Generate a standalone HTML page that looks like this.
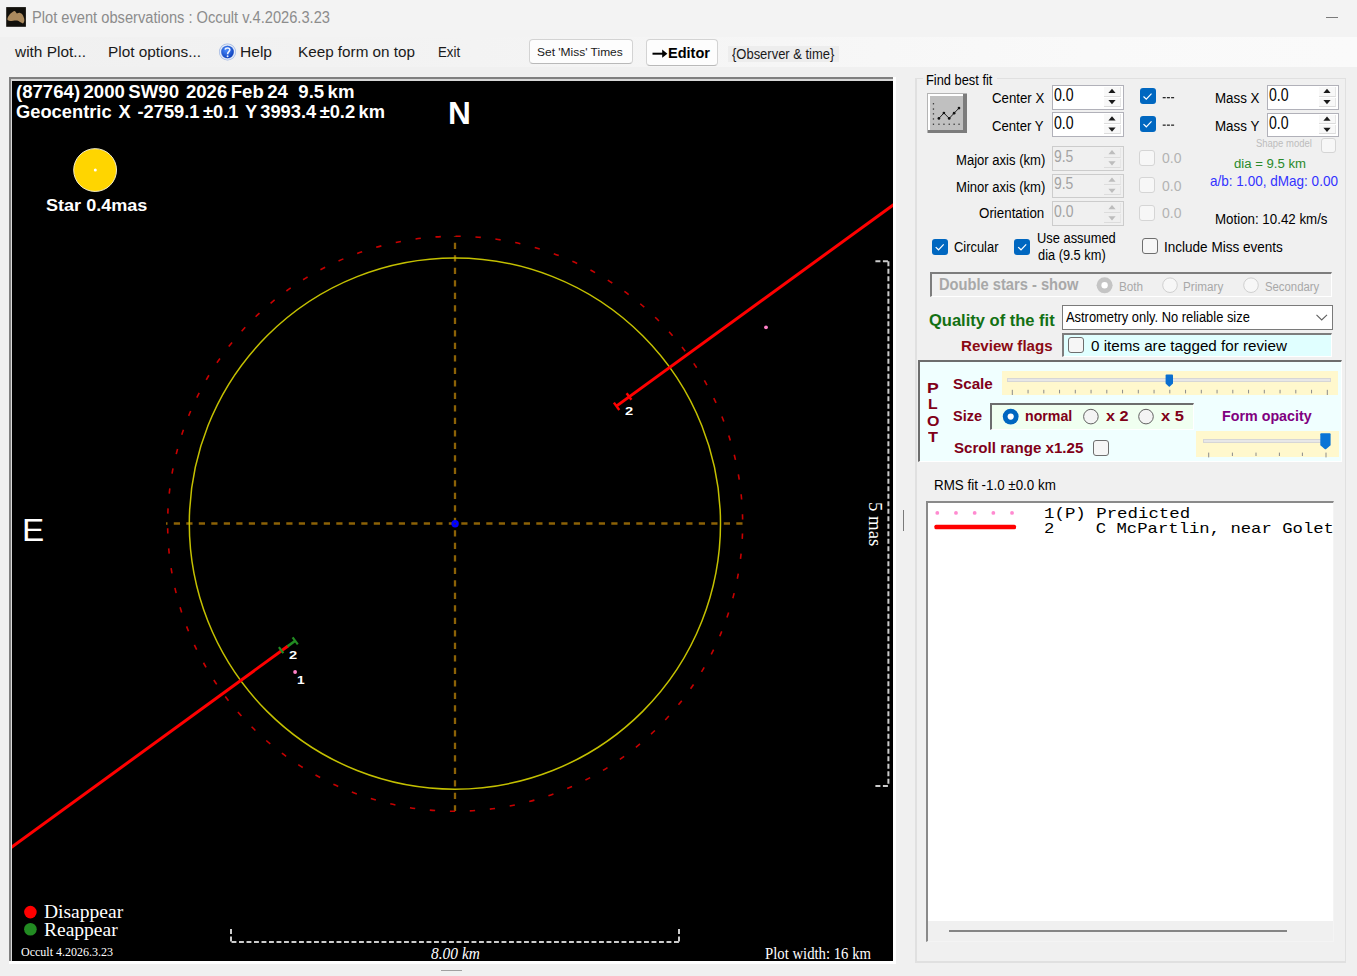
<!DOCTYPE html>
<html><head><meta charset="utf-8">
<style>
html,body{margin:0;padding:0;}
body{width:1357px;height:976px;position:relative;overflow:hidden;background:#f0f0f0;font-family:"Liberation Sans",sans-serif;}
.b{position:absolute;box-sizing:border-box;}
.t{position:absolute;white-space:pre;line-height:1;transform-origin:0 0;}
svg{position:absolute;left:0;top:0;}
</style></head><body>
<div class="b" style="left:0px;top:0px;width:1357px;height:37px;background:#f3f3f3"></div>
<div class="b" style="left:0px;top:37px;width:1357px;height:30px;background:linear-gradient(90deg,#f0f0f0 0%,#f3f3f3 35%,#f9f9f9 80%,#fafafa 100%)"></div>
<div class="b" style="left:1326px;top:16.5px;width:12px;height:1px;background:#7a7a7a"></div>
<div class="b" style="left:529px;top:39px;width:104px;height:25px;background:#fdfdfd;border:1px solid #d3d3d3;border-bottom-color:#b9b9b9;border-radius:4px"></div>
<div class="b" style="left:645.5px;top:39px;width:72.5px;height:27px;background:#fdfdfd;border:1px solid #d3d3d3;border-bottom-color:#b9b9b9;border-radius:4px"></div>
<div class="b" style="left:728px;top:46px;width:111px;height:16px;background:#ededed"></div>
<div class="b" style="left:9px;top:77px;width:887px;height:887px;background:#ffffff"></div>
<div class="b" style="left:9px;top:77px;width:884px;height:884px;background:#808080"></div>
<div class="b" style="left:11px;top:79px;width:882px;height:882px;background:#d8d8d8"></div>
<div class="b" style="left:12px;top:81px;width:881px;height:880px;background:#000000"></div>
<div class="b" style="left:441px;top:970px;width:21px;height:1px;background:#a0a0a0"></div>
<div class="b" style="left:915px;top:78px;width:431px;height:885px;border:1px solid #e0e0e0;border-left-width:2px;border-bottom-width:2px"></div>
<div class="b" style="left:923px;top:70px;width:74px;height:16px;background:#f0f0f0"></div>
<div class="b" style="left:926.5px;top:93px;width:40px;height:40px;background:#7c7c7c"></div>
<div class="b" style="left:926.5px;top:93px;width:40px;height:1px;background:#b4b4b4"></div>
<div class="b" style="left:926.5px;top:93px;width:1px;height:40px;background:#b4b4b4"></div>
<div class="b" style="left:927.5px;top:94px;width:35.5px;height:36px;background:#ffffff"></div>
<div class="b" style="left:929.5px;top:96px;width:33.5px;height:34px;background:#c0c0c0"></div>
<div class="b" style="left:1051.5px;top:84.5px;width:72.5px;height:25px;background:#ffffff;border:1.5px solid #b1b1b9"></div>
<div class="b" style="left:1104px;top:86.5px;width:17px;height:10px;background:#f8f8f8;border-right:1px solid #e6e6e6;border-bottom:1px solid #dcdcdc"></div>
<div class="b" style="left:1104px;top:97.5px;width:17px;height:9px;background:#f8f8f8;border-right:1px solid #e6e6e6;border-bottom:1px solid #dcdcdc"></div>

<div class="b" style="left:1051.5px;top:112px;width:72.5px;height:25px;background:#ffffff;border:1.5px solid #b1b1b9"></div>
<div class="b" style="left:1104px;top:114px;width:17px;height:10px;background:#f8f8f8;border-right:1px solid #e6e6e6;border-bottom:1px solid #dcdcdc"></div>
<div class="b" style="left:1104px;top:125px;width:17px;height:9px;background:#f8f8f8;border-right:1px solid #e6e6e6;border-bottom:1px solid #dcdcdc"></div>

<div class="b" style="left:1266.5px;top:84.5px;width:72.5px;height:25px;background:#ffffff;border:1.5px solid #b1b1b9"></div>
<div class="b" style="left:1319px;top:86.5px;width:17px;height:10px;background:#f8f8f8;border-right:1px solid #e6e6e6;border-bottom:1px solid #dcdcdc"></div>
<div class="b" style="left:1319px;top:97.5px;width:17px;height:9px;background:#f8f8f8;border-right:1px solid #e6e6e6;border-bottom:1px solid #dcdcdc"></div>

<div class="b" style="left:1266.5px;top:112.5px;width:72.5px;height:24.5px;background:#ffffff;border:1.5px solid #b1b1b9"></div>
<div class="b" style="left:1319px;top:114.5px;width:17px;height:9.75px;background:#f8f8f8;border-right:1px solid #e6e6e6;border-bottom:1px solid #dcdcdc"></div>
<div class="b" style="left:1319px;top:125.25px;width:17px;height:8.75px;background:#f8f8f8;border-right:1px solid #e6e6e6;border-bottom:1px solid #dcdcdc"></div>

<div class="b" style="left:1052px;top:146px;width:72px;height:24.5px;background:#f0f0f0;border:1.5px solid #cccccc"></div>
<div class="b" style="left:1104px;top:148px;width:17px;height:9.75px;background:#efefef;border-right:1px solid #e6e6e6;border-bottom:1px solid #dcdcdc"></div>
<div class="b" style="left:1104px;top:158.75px;width:17px;height:8.75px;background:#efefef;border-right:1px solid #e6e6e6;border-bottom:1px solid #dcdcdc"></div>

<div class="b" style="left:1052px;top:173.5px;width:72px;height:24.5px;background:#f0f0f0;border:1.5px solid #cccccc"></div>
<div class="b" style="left:1104px;top:175.5px;width:17px;height:9.75px;background:#efefef;border-right:1px solid #e6e6e6;border-bottom:1px solid #dcdcdc"></div>
<div class="b" style="left:1104px;top:186.25px;width:17px;height:8.75px;background:#efefef;border-right:1px solid #e6e6e6;border-bottom:1px solid #dcdcdc"></div>

<div class="b" style="left:1052px;top:201px;width:72px;height:24.5px;background:#f0f0f0;border:1.5px solid #cccccc"></div>
<div class="b" style="left:1104px;top:203px;width:17px;height:9.75px;background:#efefef;border-right:1px solid #e6e6e6;border-bottom:1px solid #dcdcdc"></div>
<div class="b" style="left:1104px;top:213.75px;width:17px;height:8.75px;background:#efefef;border-right:1px solid #e6e6e6;border-bottom:1px solid #dcdcdc"></div>

<div class="b" style="left:1139.5px;top:88.2px;width:16px;height:16px;background:#0067c0;border-radius:3px"></div>
<div class="b" style="left:1139.5px;top:115.8px;width:16px;height:16px;background:#0067c0;border-radius:3px"></div>
<div class="b" style="left:1321.3px;top:138px;width:14.5px;height:14.5px;background:#f7f7f7;border:1px solid #d5d5d5;border-radius:3px"></div>
<div class="b" style="left:1139.3px;top:150px;width:16px;height:16px;background:#f7f7f7;border:1px solid #d5d5d5;border-radius:3px"></div>
<div class="b" style="left:1139.3px;top:177.2px;width:16px;height:16px;background:#f7f7f7;border:1px solid #d5d5d5;border-radius:3px"></div>
<div class="b" style="left:1139.3px;top:204.5px;width:16px;height:16px;background:#f7f7f7;border:1px solid #d5d5d5;border-radius:3px"></div>
<div class="b" style="left:931.7px;top:238.8px;width:16px;height:16px;background:#0067c0;border-radius:3px"></div>
<div class="b" style="left:1014.2px;top:238.8px;width:16px;height:16px;background:#0067c0;border-radius:3px"></div>
<div class="b" style="left:1141.7px;top:238.4px;width:16px;height:16px;background:#f6f6f6;border:1px solid #6e6e6e;border-radius:3px"></div>
<div class="b" style="left:930px;top:272px;width:402px;height:25px;background:#f0f0f0;border-top:2px solid #7d7d7d;border-left:2px solid #7d7d7d;border-right:1px solid #ffffff;border-bottom:1px solid #ffffff"></div>
<div class="b" style="left:1062px;top:305px;width:270.5px;height:25px;background:#ffffff;border:1px solid #7a7a7a"></div>
<div class="b" style="left:1062px;top:332.5px;width:269.5px;height:24px;background:#e0ffff;border-top:2px solid #7d7d7d;border-left:2px solid #7d7d7d;border-right:1px solid #ffffff;border-bottom:1px solid #ffffff"></div>
<div class="b" style="left:1067.8px;top:337.4px;width:16px;height:16px;background:#f6f6f6;border:1px solid #6e6e6e;border-radius:3px"></div>
<div class="b" style="left:918px;top:359.7px;width:424px;height:102.1px;background:#f0ffff;border-top:2px solid #6d6d6d;border-left:2px solid #6d6d6d;border-right:1px solid #ffffff;border-bottom:1px solid #ffffff"></div>
<div class="b" style="left:1001.7px;top:371px;width:336.6px;height:23.7px;background:#fff8cd"></div>
<div class="b" style="left:1007.4px;top:377.8px;width:323.3px;height:4.2px;background:#e7e7e7;border:1px solid #d6d6d6"></div>
<div class="b" style="left:990.4px;top:402.8px;width:203.6px;height:27.6px;background:#f0fff0;border-top:2px solid #6d6d6d;border-left:2px solid #6d6d6d;border-right:1px solid #ffffff;border-bottom:1px solid #ffffff"></div>
<div class="b" style="left:1093px;top:440px;width:16px;height:16px;background:#f6f6f6;border:1px solid #6e6e6e;border-radius:3px"></div>
<div class="b" style="left:1195.5px;top:431.3px;width:143.4px;height:25.7px;background:#fff8cd"></div>
<div class="b" style="left:1203px;top:439.2px;width:126.8px;height:4.2px;background:#e7e7e7;border:1px solid #d6d6d6"></div>
<div class="b" style="left:903px;top:510px;width:1px;height:21px;background:#7a7a7a"></div>
<div class="b" style="left:925.7px;top:500.8px;width:408.3px;height:441.2px;background:#ffffff;border-top:2px solid #8a8a8a;border-left:2px solid #8a8a8a;border-right:1px solid #f4f4f4;border-bottom:1px solid #f4f4f4"></div>
<div class="b" style="left:927.7px;top:921px;width:405.3px;height:20px;background:#f0f0f0"></div>
<div class="b" style="left:948.5px;top:930px;width:338.2px;height:2.2px;background:#858585"></div>
<svg width="1357" height="976" style="position:absolute;left:0;top:0"><defs><clipPath id="pc"><rect x="12" y="81" width="881" height="880"/></clipPath></defs><g clip-path="url(#pc)"><path d="M166,523.5 H743" stroke="#8c6206" stroke-width="2.3" stroke-dasharray="6.2 6.3" stroke-dashoffset="4.7" fill="none"/><path d="M455,236 V811" stroke="#8c6206" stroke-width="2.3" stroke-dasharray="6.2 6.3" stroke-dashoffset="5.7" fill="none"/><circle cx="454.9" cy="523.55" r="265.6" fill="none" stroke="#c4c000" stroke-width="1.5"/><circle cx="455.15" cy="523.75" r="287.5" fill="none" stroke="#c80000" stroke-width="1.6" stroke-dasharray="5.3 14.77" stroke-dashoffset="-9.9"/><circle cx="455.1" cy="523.7" r="3.7" fill="#0000ff"/><circle cx="455.1" cy="523.7" r="0.9" fill="#3a2a40"/><path d="M10,848.4 L288,646" stroke="#ff0000" stroke-width="3" fill="none"/><path d="M616.4,406.1 L895,203.7" stroke="#ff0000" stroke-width="3" fill="none"/><path d="M287.5,646.4 L295.3,640.7" stroke="#228b22" stroke-width="2.6" fill="none"/><path d="M292.6,637.4 L297.8,644.4" stroke="#228b22" stroke-width="2.2" fill="none"/><path d="M278.9,647.1 L283.3,653.2" stroke="#228b22" stroke-width="2.2" fill="none"/><path d="M613.9,402.6 L619.3,410" stroke="#ff0000" stroke-width="2.4" fill="none"/><path d="M626.6,393.2 L631.4,399.8" stroke="#ff0000" stroke-width="2.4" fill="none"/><circle cx="295.1" cy="672" r="1.9" fill="#ff80c8"/><circle cx="766" cy="327.3" r="1.9" fill="#ff80c8"/><circle cx="95.1" cy="170.05" r="21.4" fill="#ffd500" stroke="#f4eec8" stroke-width="1"/><circle cx="95.3" cy="170.1" r="1.5" fill="#ffffff"/><circle cx="30.4" cy="912.1" r="6.3" fill="#ff0000"/><circle cx="30.4" cy="929.2" r="6.3" fill="#228b22"/><path d="M231,942 V929 M231,942 H679 M679,942 V929" stroke="#cccccc" stroke-width="2" stroke-dasharray="4.9 2.6" stroke-dashoffset="-0.5" fill="none"/><path d="M875.4,261.3 H888.7 M888.4,261.3 V786 M875.4,786 H888.7" stroke="#cccccc" stroke-width="2" stroke-dasharray="5 2.5" fill="none"/></g><path d="M1108.4,93 L1115.6,93 L1112,88.8 Z" fill="#1a1a1a"/><path d="M1108.4,100 L1115.6,100 L1112,104.2 Z" fill="#1a1a1a"/><path d="M1108.4,120.5 L1115.6,120.5 L1112,116.3 Z" fill="#1a1a1a"/><path d="M1108.4,127.5 L1115.6,127.5 L1112,131.7 Z" fill="#1a1a1a"/><path d="M1323.4,93 L1330.6,93 L1327,88.8 Z" fill="#1a1a1a"/><path d="M1323.4,100 L1330.6,100 L1327,104.2 Z" fill="#1a1a1a"/><path d="M1323.4,120.75 L1330.6,120.75 L1327,116.55 Z" fill="#1a1a1a"/><path d="M1323.4,127.75 L1330.6,127.75 L1327,131.95 Z" fill="#1a1a1a"/><path d="M1108.4,154.25 L1115.6,154.25 L1112,150.05 Z" fill="#bdbdbd"/><path d="M1108.4,161.25 L1115.6,161.25 L1112,165.45 Z" fill="#bdbdbd"/><path d="M1108.4,181.75 L1115.6,181.75 L1112,177.55 Z" fill="#bdbdbd"/><path d="M1108.4,188.75 L1115.6,188.75 L1112,192.95 Z" fill="#bdbdbd"/><path d="M1108.4,209.25 L1115.6,209.25 L1112,205.05 Z" fill="#bdbdbd"/><path d="M1108.4,216.25 L1115.6,216.25 L1112,220.45 Z" fill="#bdbdbd"/><path d="M1143.5,96.5 L1146.3,99.2 L1151.5,93.7" fill="none" stroke="#ffffff" stroke-width="1.2"/><path d="M1143.5,124.1 L1146.3,126.8 L1151.5,121.3" fill="none" stroke="#ffffff" stroke-width="1.2"/><path d="M935.7,247.1 L938.5,249.8 L943.7,244.3" fill="none" stroke="#ffffff" stroke-width="1.2"/><path d="M1018.2,247.1 L1021,249.8 L1026.2,244.3" fill="none" stroke="#ffffff" stroke-width="1.2"/><circle cx="1104.6" cy="285.3" r="8" fill="#c4c4c4"/><circle cx="1104.6" cy="285.3" r="3.2" fill="#ffffff"/><circle cx="1170" cy="285.2" r="7.3" fill="#f7f7f7" stroke="#d0d0d0" stroke-width="1"/><circle cx="1251" cy="285.2" r="7.3" fill="#f7f7f7" stroke="#d0d0d0" stroke-width="1"/><path d="M1316.5,314.8 L1321.7,320 L1327,314.8" fill="none" stroke="#606060" stroke-width="1.1"/><rect x="1011.8" y="389.8" width="1" height="5.2" fill="#8c8c8c"/><rect x="1027.55" y="389.8" width="1" height="3.6" fill="#8c8c8c"/><rect x="1043.3" y="389.8" width="1" height="3.6" fill="#8c8c8c"/><rect x="1059.05" y="389.8" width="1" height="3.6" fill="#8c8c8c"/><rect x="1074.8" y="389.8" width="1" height="3.6" fill="#8c8c8c"/><rect x="1090.55" y="389.8" width="1" height="3.6" fill="#8c8c8c"/><rect x="1106.3" y="389.8" width="1" height="3.6" fill="#8c8c8c"/><rect x="1122.05" y="389.8" width="1" height="3.6" fill="#8c8c8c"/><rect x="1137.8" y="389.8" width="1" height="3.6" fill="#8c8c8c"/><rect x="1153.55" y="389.8" width="1" height="3.6" fill="#8c8c8c"/><rect x="1169.3" y="389.8" width="1" height="3.6" fill="#8c8c8c"/><rect x="1185.05" y="389.8" width="1" height="3.6" fill="#8c8c8c"/><rect x="1200.8" y="389.8" width="1" height="3.6" fill="#8c8c8c"/><rect x="1216.55" y="389.8" width="1" height="3.6" fill="#8c8c8c"/><rect x="1232.3" y="389.8" width="1" height="3.6" fill="#8c8c8c"/><rect x="1248.05" y="389.8" width="1" height="3.6" fill="#8c8c8c"/><rect x="1263.8" y="389.8" width="1" height="3.6" fill="#8c8c8c"/><rect x="1279.55" y="389.8" width="1" height="3.6" fill="#8c8c8c"/><rect x="1295.3" y="389.8" width="1" height="3.6" fill="#8c8c8c"/><rect x="1311.05" y="389.8" width="1" height="3.6" fill="#8c8c8c"/><rect x="1326.8" y="389.8" width="1" height="5.2" fill="#8c8c8c"/><path d="M1165.6,375.5 Q1165.6,374.6 1166.5,374.6 L1172.1,374.6 Q1173,374.6 1173,375.5 L1173,383.4 L1169.8,386.6 Q1169.3,387 1168.8,386.6 L1165.6,383.4 Z" fill="#0a6fd0"/><circle cx="1010.7" cy="416.6" r="7.9" fill="#0067c0"/><circle cx="1010.7" cy="416.6" r="3.1" fill="#ffffff"/><circle cx="1090.9" cy="416.6" r="7.3" fill="#f4f4f4" stroke="#616161" stroke-width="1"/><circle cx="1146" cy="416.6" r="7.3" fill="#f4f4f4" stroke="#616161" stroke-width="1"/><rect x="1208.2" y="452.6" width="1" height="4.8" fill="#8c8c8c"/><rect x="1231.9" y="452.6" width="1" height="3.4" fill="#8c8c8c"/><rect x="1255.5" y="452.6" width="1" height="3.4" fill="#8c8c8c"/><rect x="1278.9" y="452.6" width="1" height="3.4" fill="#8c8c8c"/><rect x="1301.9" y="452.6" width="1" height="3.4" fill="#8c8c8c"/><rect x="1325.5" y="452.6" width="1" height="4.8" fill="#8c8c8c"/><path d="M1320.3,434.2 Q1320.3,433.3 1321.2,433.3 L1329.7,433.3 Q1330.6,433.3 1330.6,434.2 L1330.6,445.2 L1326.2,449 Q1325.45,449.5 1324.7,449 L1320.3,445.2 Z" fill="#0a74d6"/><rect x="1162.7" y="97" width="3" height="1.3" fill="#2a2a2a"/><rect x="1166.9" y="97" width="3" height="1.3" fill="#2a2a2a"/><rect x="1171.1" y="97" width="3" height="1.3" fill="#2a2a2a"/><rect x="1162.7" y="124.5" width="3" height="1.3" fill="#2a2a2a"/><rect x="1166.9" y="124.5" width="3" height="1.3" fill="#2a2a2a"/><rect x="1171.1" y="124.5" width="3" height="1.3" fill="#2a2a2a"/><circle cx="937.3" cy="512.9" r="1.9" fill="#ff8ad0"/><circle cx="955.98" cy="512.9" r="1.9" fill="#ff8ad0"/><circle cx="974.66" cy="512.9" r="1.9" fill="#ff8ad0"/><circle cx="993.34" cy="512.9" r="1.9" fill="#ff8ad0"/><circle cx="1012.02" cy="512.9" r="1.9" fill="#ff8ad0"/><rect x="934.4" y="524.7" width="81.6" height="4.6" rx="1.6" fill="#ff0000"/><path d="M652.5,53.7 H664" stroke="#000" stroke-width="2"/><path d="M662.2,49.6 L667.4,53.7 L662.2,57.8 Z" fill="#000"/><defs><radialGradient id="hg" cx="0.4" cy="0.35" r="0.7"><stop offset="0" stop-color="#4a8cff"/><stop offset="1" stop-color="#0a3cb8"/></radialGradient></defs><circle cx="227.5" cy="52" r="8.5" fill="#9fb6e2"/><circle cx="227.5" cy="52" r="7.2" fill="none" stroke="#e4ecfa" stroke-width="1.3"/><circle cx="227.5" cy="52" r="6.2" fill="url(#hg)"/><path d="M225.2,49.6 C225.3,47.6 229.8,47.4 229.8,49.8 C229.8,51.6 227.6,51.8 227.6,54.3" fill="none" stroke="#eef4ff" stroke-width="1.6"/><circle cx="227.6" cy="56.3" r="0.95" fill="#eef4ff"/><rect x="6.2" y="7.1" width="19.7" height="19.7" fill="#12100c"/><path d="M7.4,19 C8,16 11,12.5 14.4,11.1 C15.5,11.3 16,12.8 16.9,13.6 C18,13 19,12.7 20.1,12.9 C22,13.5 23.2,15 23.6,17 C24.5,19 25,21.5 23,23.6 C21,22.8 19,21 17.2,20.5 C14,20.2 11,21.5 9.3,20.8 C8.2,20.5 7.3,20 7.4,19 Z" fill="#ab8a5e"/><rect x="932.8" y="103.1" width="1.3" height="1.3" fill="#333"/><rect x="932.8" y="108.4" width="1.3" height="1.3" fill="#333"/><rect x="932.8" y="113.2" width="1.3" height="1.3" fill="#333"/><rect x="932.8" y="118.3" width="1.3" height="1.3" fill="#333"/><rect x="932.8" y="123.6" width="1.3" height="1.3" fill="#333"/><rect x="938.3" y="123.6" width="1.3" height="1.3" fill="#333"/><rect x="943.3" y="123.6" width="1.3" height="1.3" fill="#333"/><rect x="948.6" y="123.6" width="1.3" height="1.3" fill="#333"/><rect x="953.5" y="123.6" width="1.3" height="1.3" fill="#333"/><rect x="958.4" y="123.6" width="1.3" height="1.3" fill="#333"/><path d="M938.9,118.4 L943.9,113 L949.2,118.4 L954.1,113.2 L959,108.1" fill="none" stroke="#111" stroke-width="0.9"/><circle cx="938.9" cy="118.4" r="1.35" fill="#111"/><circle cx="943.9" cy="113" r="1.35" fill="#111"/><circle cx="949.2" cy="118.4" r="1.35" fill="#111"/><circle cx="954.1" cy="113.2" r="1.35" fill="#111"/><circle cx="959" cy="108.1" r="1.35" fill="#111"/></svg>
<div class="t" style="left:31.71px;top:10.00px;font-size:16px;font-family:'Liberation Sans', sans-serif;color:#8c8c8c;transform:scaleX(0.9161);">Plot event observations : Occult v.4.2026.3.23</div>
<div class="t" style="left:14.70px;top:44.00px;font-size:15.5px;font-family:'Liberation Sans', sans-serif;color:#1a1a1a;transform:scaleX(0.9944);">with Plot...</div>
<div class="t" style="left:108.01px;top:44.00px;font-size:15.5px;font-family:'Liberation Sans', sans-serif;color:#1a1a1a;transform:scaleX(0.9911);">Plot options...</div>
<div class="t" style="left:240.49px;top:44.00px;font-size:15.5px;font-family:'Liberation Sans', sans-serif;color:#1a1a1a;transform:scaleX(1.0047);">Help</div>
<div class="t" style="left:298.02px;top:44.00px;font-size:15.5px;font-family:'Liberation Sans', sans-serif;color:#1a1a1a;transform:scaleX(0.9839);">Keep form on top</div>
<div class="t" style="left:438.47px;top:44.00px;font-size:15.5px;font-family:'Liberation Sans', sans-serif;color:#1a1a1a;transform:scaleX(0.8560);">Exit</div>
<div class="t" style="left:536.98px;top:47.00px;font-size:11.5px;font-family:'Liberation Sans', sans-serif;color:#1a1a1a;transform:scaleX(1.0415);">Set 'Miss' Times</div>
<div class="t" style="left:667.86px;top:45.00px;font-size:15.5px;font-family:'Liberation Sans', sans-serif;color:#000;font-weight:bold;transform:scaleX(0.9370);">Editor</div>
<div class="t" style="left:731.61px;top:47.00px;font-size:14px;font-family:'Liberation Sans', sans-serif;color:#1a1a1a;transform:scaleX(0.9263);">{Observer &amp; time}</div>
<div class="t" style="left:16.35px;top:84.00px;font-size:17.5px;font-family:'Liberation Sans', sans-serif;color:#ffffff;font-weight:bold;word-spacing:-1.6px;transform:scaleX(1.0622);">(87764) 2000 SW90  2026 Feb 24   9.5 km</div>
<div class="t" style="left:16.17px;top:104.00px;font-size:17.5px;font-family:'Liberation Sans', sans-serif;color:#ffffff;font-weight:bold;word-spacing:-1.6px;transform:scaleX(1.0459);">Geocentric  X  -2759.1 ±0.1  Y 3993.4 ±0.2 km</div>
<div class="t" style="left:447.72px;top:98.00px;font-size:30.5px;font-family:'Liberation Sans', sans-serif;color:#ffffff;font-weight:bold;transform:scaleX(1.0381);">N</div>
<div class="t" style="left:21.60px;top:515.00px;font-size:31px;font-family:'Liberation Sans', sans-serif;color:#ffffff;transform:scaleX(1.0735);">E</div>
<div class="t" style="left:45.77px;top:197.00px;font-size:17px;font-family:'Liberation Sans', sans-serif;color:#ffffff;font-weight:bold;transform:scaleX(1.0625);">Star 0.4mas</div>
<div class="t" style="left:624.90px;top:406.00px;font-size:11px;font-family:'Liberation Sans', sans-serif;color:#ffffff;font-weight:bold;transform:scaleX(1.3333);">2</div>
<div class="t" style="left:288.80px;top:650.00px;font-size:11px;font-family:'Liberation Sans', sans-serif;color:#ffffff;font-weight:bold;transform:scaleX(1.3333);">2</div>
<div class="t" style="left:297.05px;top:675.00px;font-size:11px;font-family:'Liberation Sans', sans-serif;color:#ffffff;font-weight:bold;transform:scaleX(1.2453);">1</div>
<div class="t" style="left:44.29px;top:902.00px;font-size:19px;font-family:'Liberation Serif', serif;color:#ffffff;transform:scaleX(1.0276);">Disappear</div>
<div class="t" style="left:44.29px;top:920.00px;font-size:19px;font-family:'Liberation Serif', serif;color:#ffffff;transform:scaleX(1.0266);">Reappear</div>
<div class="t" style="left:20.54px;top:945.00px;font-size:13px;font-family:'Liberation Serif', serif;color:#ffffff;transform:scaleX(0.9245);">Occult 4.2026.3.23</div>
<div class="t" style="left:430.73px;top:945.00px;font-size:17px;font-family:'Liberation Serif', serif;color:#ffffff;font-style:italic;transform:scaleX(0.9083);">8.00 km</div>
<div class="t" style="left:764.88px;top:945.00px;font-size:17.5px;font-family:'Liberation Serif', serif;color:#ffffff;transform:scaleX(0.8418);">Plot width: 16 km</div>
<div class="t" style="left:869.10px;top:486.30px;font-size:19px;font-family:'Liberation Serif', serif;color:#ffffff;transform-origin:0px 15.91px;transform:translate(0px,0px) rotate(90deg) scaleX(0.9893);">5 mas</div>
<div class="t" style="left:926.21px;top:72.00px;font-size:15.5px;font-family:'Liberation Sans', sans-serif;color:#000000;transform:scaleX(0.8286);">Find best fit</div>
<div class="t" style="left:991.90px;top:90.00px;font-size:15.5px;font-family:'Liberation Sans', sans-serif;color:#000000;transform:scaleX(0.8534);">Center X</div>
<div class="t" style="left:991.91px;top:118.00px;font-size:15.5px;font-family:'Liberation Sans', sans-serif;color:#000000;transform:scaleX(0.8465);">Center Y</div>
<div class="t" style="left:1053.72px;top:87.00px;font-size:17.5px;font-family:'Liberation Sans', sans-serif;color:#000000;transform:scaleX(0.8054);">0.0</div>
<div class="t" style="left:1053.72px;top:115.00px;font-size:17.5px;font-family:'Liberation Sans', sans-serif;color:#000000;transform:scaleX(0.8054);">0.0</div>
<div class="t" style="left:1214.77px;top:90.00px;font-size:15.5px;font-family:'Liberation Sans', sans-serif;color:#000000;transform:scaleX(0.8599);">Mass X</div>
<div class="t" style="left:1214.77px;top:118.00px;font-size:15.5px;font-family:'Liberation Sans', sans-serif;color:#000000;transform:scaleX(0.8616);">Mass Y</div>
<div class="t" style="left:1268.72px;top:87.00px;font-size:17.5px;font-family:'Liberation Sans', sans-serif;color:#000000;transform:scaleX(0.8054);">0.0</div>
<div class="t" style="left:1268.72px;top:115.00px;font-size:17.5px;font-family:'Liberation Sans', sans-serif;color:#000000;transform:scaleX(0.8054);">0.0</div>
<div class="t" style="left:1256.32px;top:139.00px;font-size:10px;font-family:'Liberation Sans', sans-serif;color:#bdbdbd;transform:scaleX(0.9463);">Shape model</div>
<div class="t" style="left:955.89px;top:152.00px;font-size:15.5px;font-family:'Liberation Sans', sans-serif;color:#000000;transform:scaleX(0.8433);">Major axis (km)</div>
<div class="t" style="left:955.89px;top:179.00px;font-size:15.5px;font-family:'Liberation Sans', sans-serif;color:#000000;transform:scaleX(0.8433);">Minor axis (km)</div>
<div class="t" style="left:978.70px;top:205.00px;font-size:15.5px;font-family:'Liberation Sans', sans-serif;color:#000000;transform:scaleX(0.8612);">Orientation</div>
<div class="t" style="left:1053.81px;top:148.00px;font-size:16.5px;font-family:'Liberation Sans', sans-serif;color:#a3a3a3;transform:scaleX(0.8441);">9.5</div>
<div class="t" style="left:1053.81px;top:175.00px;font-size:16.5px;font-family:'Liberation Sans', sans-serif;color:#a3a3a3;transform:scaleX(0.8441);">9.5</div>
<div class="t" style="left:1053.89px;top:203.00px;font-size:16.5px;font-family:'Liberation Sans', sans-serif;color:#a3a3a3;transform:scaleX(0.8456);">0.0</div>
<div class="t" style="left:1162.06px;top:150.00px;font-size:15.5px;font-family:'Liberation Sans', sans-serif;color:#b3b3b3;transform:scaleX(0.9008);">0.0</div>
<div class="t" style="left:1162.06px;top:178.00px;font-size:15.5px;font-family:'Liberation Sans', sans-serif;color:#b3b3b3;transform:scaleX(0.9008);">0.0</div>
<div class="t" style="left:1162.06px;top:205.00px;font-size:15.5px;font-family:'Liberation Sans', sans-serif;color:#b3b3b3;transform:scaleX(0.9008);">0.0</div>
<div class="t" style="left:1233.85px;top:158.00px;font-size:12px;font-family:'Liberation Sans', sans-serif;color:#2a8a2a;transform:scaleX(1.0960);">dia = 9.5 km</div>
<div class="t" style="left:1210.13px;top:174.00px;font-size:14.3px;font-family:'Liberation Sans', sans-serif;color:#3333ff;transform:scaleX(0.9470);">a/b: 1.00, dMag: 0.00</div>
<div class="t" style="left:1214.72px;top:212.00px;font-size:14.8px;font-family:'Liberation Sans', sans-serif;color:#000000;transform:scaleX(0.9000);">Motion: 10.42 km/s</div>
<div class="t" style="left:954.32px;top:239.00px;font-size:15.5px;font-family:'Liberation Sans', sans-serif;color:#000000;transform:scaleX(0.8319);">Circular</div>
<div class="t" style="left:1037.48px;top:231.00px;font-size:14px;font-family:'Liberation Sans', sans-serif;color:#000000;transform:scaleX(0.9199);">Use assumed</div>
<div class="t" style="left:1037.94px;top:248.00px;font-size:14px;font-family:'Liberation Sans', sans-serif;color:#000000;transform:scaleX(0.9153);">dia (9.5 km)</div>
<div class="t" style="left:1164.08px;top:239.00px;font-size:15.5px;font-family:'Liberation Sans', sans-serif;color:#000000;transform:scaleX(0.8728);">Include Miss events</div>
<div class="t" style="left:938.58px;top:277.00px;font-size:16px;font-family:'Liberation Sans', sans-serif;color:#a8a8a8;font-weight:bold;transform:scaleX(0.9167);">Double stars - show</div>
<div class="t" style="left:1118.76px;top:281.00px;font-size:12.5px;font-family:'Liberation Sans', sans-serif;color:#a8a8a8;transform:scaleX(0.9390);">Both</div>
<div class="t" style="left:1183.36px;top:281.00px;font-size:12.5px;font-family:'Liberation Sans', sans-serif;color:#a8a8a8;transform:scaleX(0.9358);">Primary</div>
<div class="t" style="left:1265.45px;top:281.00px;font-size:12.5px;font-family:'Liberation Sans', sans-serif;color:#a8a8a8;transform:scaleX(0.9071);">Secondary</div>
<div class="t" style="left:929.08px;top:313.00px;font-size:16px;font-family:'Liberation Sans', sans-serif;color:#137013;font-weight:bold;transform:scaleX(1.0318);">Quality of the fit</div>
<div class="t" style="left:1065.90px;top:309.00px;font-size:15.5px;font-family:'Liberation Sans', sans-serif;color:#000000;transform:scaleX(0.8314);">Astrometry only. No reliable size</div>
<div class="t" style="left:961.49px;top:338.00px;font-size:15px;font-family:'Liberation Sans', sans-serif;color:#8b0a14;font-weight:bold;transform:scaleX(1.0086);">Review flags</div>
<div class="t" style="left:1091.39px;top:338.00px;font-size:15px;font-family:'Liberation Sans', sans-serif;color:#000000;transform:scaleX(1.0125);">0 items are tagged for review</div>
<div class="t" style="left:927.32px;top:380.00px;font-size:15px;font-family:'Liberation Sans', sans-serif;color:#800018;font-weight:bold;transform:scaleX(1.1765);">P</div>
<div class="t" style="left:927.75px;top:396.00px;font-size:15px;font-family:'Liberation Sans', sans-serif;color:#800018;font-weight:bold;transform:scaleX(1.0513);">L</div>
<div class="t" style="left:927.16px;top:413.00px;font-size:15px;font-family:'Liberation Sans', sans-serif;color:#800018;font-weight:bold;transform:scaleX(1.0667);">O</div>
<div class="t" style="left:928.09px;top:429.00px;font-size:15px;font-family:'Liberation Sans', sans-serif;color:#800018;font-weight:bold;transform:scaleX(1.0889);">T</div>
<div class="t" style="left:952.91px;top:376.00px;font-size:15.5px;font-family:'Liberation Sans', sans-serif;color:#800018;font-weight:bold;transform:scaleX(0.9827);">Scale</div>
<div class="t" style="left:953.21px;top:408.00px;font-size:15px;font-family:'Liberation Sans', sans-serif;color:#800018;font-weight:bold;transform:scaleX(0.9667);">Size</div>
<div class="t" style="left:1025.15px;top:408.00px;font-size:15px;font-family:'Liberation Sans', sans-serif;color:#800018;font-weight:bold;transform:scaleX(0.9451);">normal</div>
<div class="t" style="left:1106.19px;top:408.00px;font-size:15px;font-family:'Liberation Sans', sans-serif;color:#800018;font-weight:bold;transform:scaleX(1.0836);">x 2</div>
<div class="t" style="left:1160.89px;top:408.00px;font-size:15px;font-family:'Liberation Sans', sans-serif;color:#800018;font-weight:bold;transform:scaleX(1.0975);">x 5</div>
<div class="t" style="left:1221.88px;top:408.00px;font-size:15.5px;font-family:'Liberation Sans', sans-serif;color:#800080;font-weight:bold;transform:scaleX(0.9211);">Form opacity</div>
<div class="t" style="left:953.80px;top:440.00px;font-size:15px;font-family:'Liberation Sans', sans-serif;color:#800018;font-weight:bold;transform:scaleX(1.0074);">Scroll range x1.25</div>
<div class="t" style="left:934.46px;top:477.00px;font-size:15.5px;font-family:'Liberation Sans', sans-serif;color:#000000;transform:scaleX(0.8630);">RMS fit -1.0 ±0.0 km</div>
<div class="t" style="left:1044.34px;top:507.00px;font-size:15px;font-family:'Liberation Mono', monospace;color:#000000;transform:scaleX(1.1599);">1(P) Predicted</div>
<div class="t" style="left:1044.35px;top:522.00px;font-size:15px;font-family:'Liberation Mono', monospace;color:#000000;transform:scaleX(1.1505);">2    C McPartlin, near Golet</div>
</body></html>
